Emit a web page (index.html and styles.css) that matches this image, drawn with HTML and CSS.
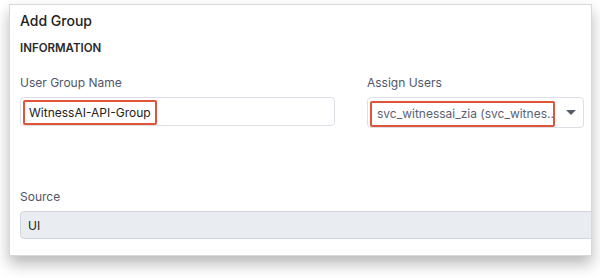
FILE: index.html
```html
<!DOCTYPE html>
<html lang="en">
<head>
  <meta charset="UTF-8" />
  <meta name="viewport" content="width=device-width, initial-scale=1.0" />
  <title>Add Group</title>
  <link rel="stylesheet" href="styles.css">
</head>
<body>
  <div class="panel">
    <h1 class="panel-title">Add Group</h1>
    <h2 class="section-title">INFORMATION</h2>
    <div class="form-row">
      <div class="field">
        <label class="field-label">User Group Name</label>
        <div class="input">
          <span class="mark">WitnessAI-API-Group</span>
        </div>
      </div>
      <div class="field">
        <label class="field-label">Assign Users</label>
        <div class="input select">
          <span class="mark mark-select">svc_witnessai_zia (svc_witnes..</span>
          <span class="caret"></span>
        </div>
      </div>
    </div>
    <div class="field source">
      <label class="field-label">Source</label>
      <div class="input readonly">UI</div>
    </div>
  </div>
</body>
</html>
```

FILE: styles.css
```css
html, body {
  min-height: 278px;
}
body {
  margin: 0;
  background: #fff;
  font-family: Inter, "Noto Sans", sans-serif;
  color: #222;
}
.panel {
  margin: 4px 8px 0 9px;
  height: 252px;
  background: #fff;
  border: 1px solid #d8d8d8;
  box-shadow: 0 8px 14px rgba(0, 0, 0, 0.28);
  overflow: hidden;
  padding: 0 8px 0 10px;
  box-sizing: border-box;
}
.panel-title {
  margin: 6px 0 0;
  font-size: 14px;
  font-weight: 500;
  line-height: 20px;
  color: #222;
}
.section-title {
  margin: 9px 0 0;
  font-size: 11.5px;
  font-weight: 600;
  line-height: 16px;
  color: #2a2a2a;
}
.form-row {
  display: grid;
  grid-template-columns: 315px 217px;
  gap: 32px;
  margin-top: 18px;
}
.field-label {
  display: block;
  font-size: 12px;
  line-height: 18px;
  color: #4f5668;
  margin-bottom: 5px;
}
.input {
  height: 29px;
  border: 1px solid #dcdfe5;
  border-radius: 4px;
  box-sizing: border-box;
  display: flex;
  align-items: center;
  padding: 0 2px;
  font-size: 12px;
  white-space: nowrap;
}
.mark {
  display: inline-block;
  border: 2px solid #e0553a;
  border-radius: 2px;
  padding: 0 4px;
  height: 25px;
  line-height: 21px;
  box-sizing: border-box;
  margin-top: 2px;
}
.select {
  height: 31px;
  justify-content: space-between;
  padding-right: 6px;
}
.mark-select {
  width: 185px;
  overflow: hidden;
  color: #5b6173;
  height: 26px;
  line-height: 22px;
  padding: 0 5px;
  margin-top: 3px;
}
.caret {
  width: 0;
  height: 0;
  border-left: 5px solid transparent;
  border-right: 5px solid transparent;
  border-top: 5px solid #555b66;
  margin-right: 1px;
}
.source {
  margin-top: 60px;
  width: 600px;
}
.readonly {
  height: 28px;
  background: #e9ecf1;
  border-color: #d3d6de;
  padding: 0 7px;
  color: #222;
}
```
